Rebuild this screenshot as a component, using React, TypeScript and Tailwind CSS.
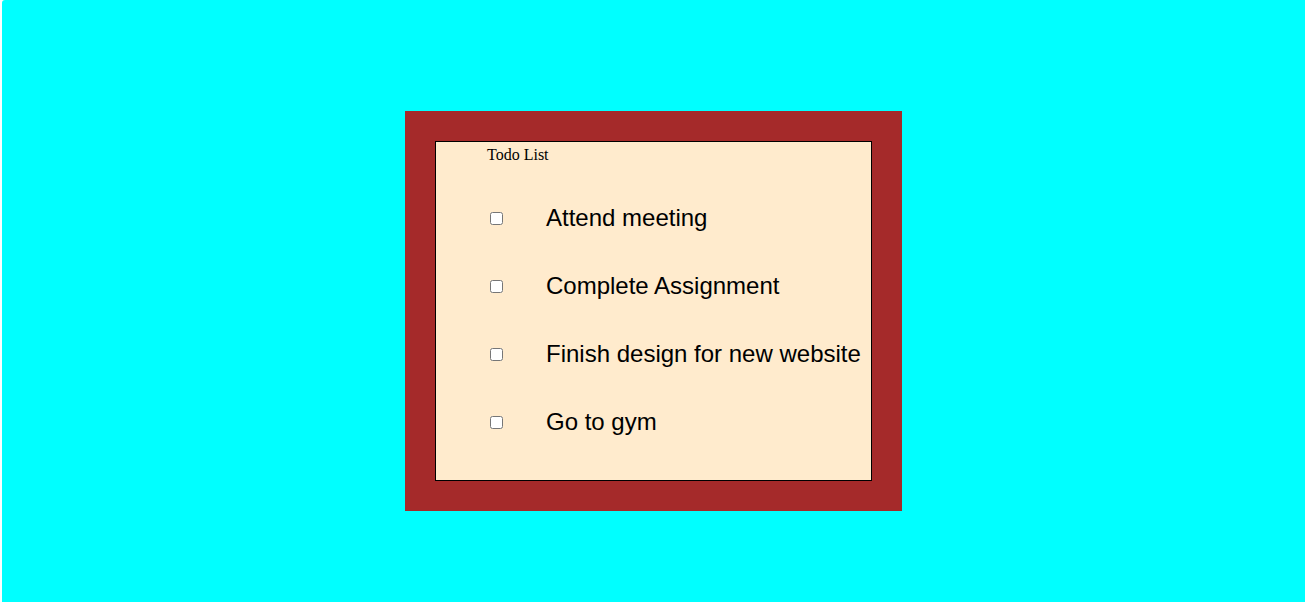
const todos = ["Attend meeting", "Complete Assignment", "Finish design for new website", "Go to gym"];

const App = () => {
  return (
    <div className="bg-white w-full h-[602px] overflow-hidden">
      <div className="ml-[2px] h-[602px] bg-[#00ffff] rounded-tl-[3px] pt-[111px] flex justify-center">
        <div className="w-[497px] h-[400px] bg-[#a52a2a] p-[30px]">
          <div className="w-full h-full border border-black bg-[#ffebcd]">
            <p className="pt-[4px] pl-[51px] text-[16px] leading-[18px] text-black font-['Liberation_Serif',serif]">
              Todo List
            </p>
            <ul className="mt-[20px]">
              {todos.map((t) => (
                <li key={t} className="h-[68px] flex items-center pl-[54px]">
                  <input type="checkbox" className="w-[13px] h-[13px] m-0" />
                  <span className="ml-[43px] text-[24px] leading-[28px] text-black font-['Liberation_Sans',Arial,sans-serif]">
                    {t}
                  </span>
                </li>
              ))}
            </ul>
          </div>
        </div>
      </div>
    </div>
  );
};

export default App;
